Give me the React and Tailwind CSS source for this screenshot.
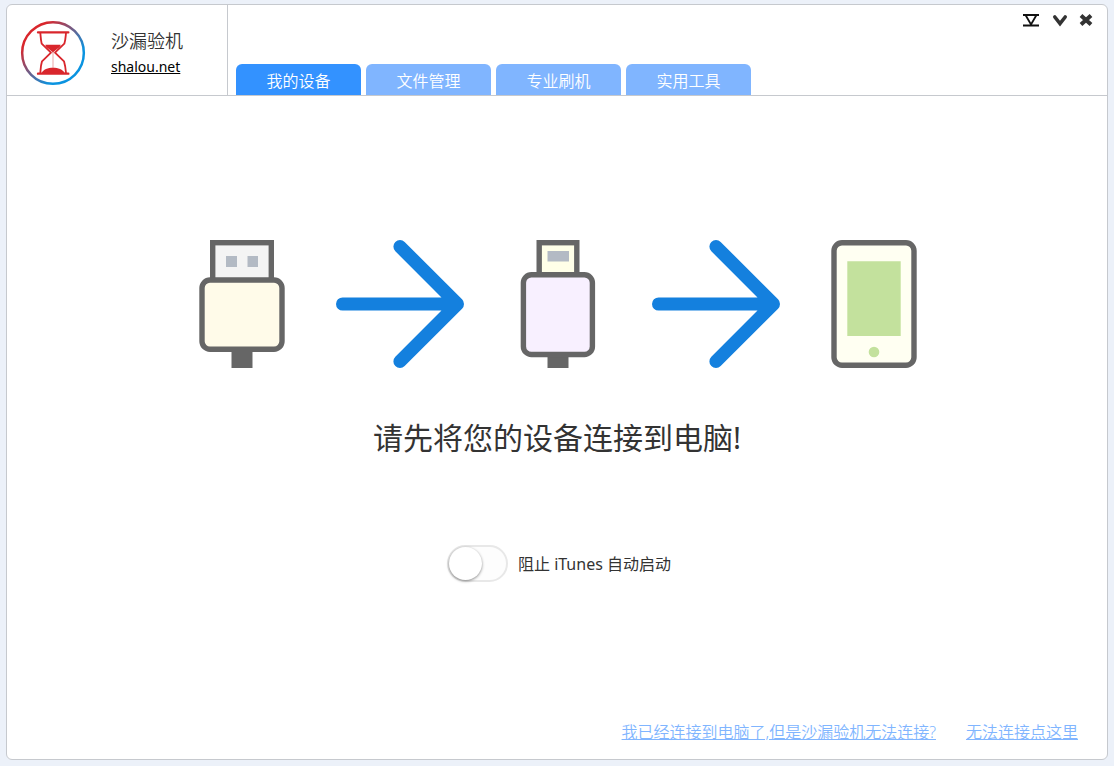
import React, { useState } from 'react';

const tabs = ['我的设备', '文件管理', '专业刷机', '实用工具'];

const Logo = () => (
    <svg className="w-[66px] h-[66px] shrink-0" viewBox="60 60 198 198" fill="none" aria-hidden="true">
        <defs>
            <linearGradient id="ring" x1="0" y1="0" x2="1" y2="1">
                <stop offset="0.2" stopColor="#d9262c" />
                <stop offset="0.72" stopColor="#0a93e0" />
            </linearGradient>
        </defs>
        <circle cx="159" cy="159" r="92.5" stroke="url(#ring)" strokeWidth="7.5" fill="#fff" />
        <g stroke="#d9262c" strokeLinecap="round" strokeLinejoin="round">
            <path d="M114 97H205M114 221H205" strokeWidth="7" />
            <path d="M121 99C122 108 122 118 125 131L153 158L126 184C122 197 122 207 121 219" strokeWidth="5.5" />
            <path d="M198 99C197 108 197 118 193 131L165 158L192 184C196 197 197 207 198 219" strokeWidth="5.5" />
        </g>
        <path d="M136 134H182C181 144 165 148 159 159C153 148 137 144 136 134Z" fill="#d9262c" />
        <path d="M159 155V204" stroke="#e69696" strokeWidth="2.5" />
        <path d="M125 219C129 208 144 203 159 203C174 203 189 208 194 219Z" fill="#d9262c" />
    </svg>
);

const UsbPlug = () => (
    <svg className="w-32 h-32" viewBox="0 0 128 128" aria-hidden="true">
        <path d="M53.5 108H74.5V128H53.5Z" fill="#666" />
        <rect x="34.7" y="2.7" width="58.6" height="44" fill="#f4f4f4" stroke="#666" strokeWidth="5.4" />
        <path d="M48 16H59V27H48ZM69.5 16H80V27H69.5Z" fill="#b3bac4" />
        <rect x="24" y="40" width="80" height="69.3" rx="8" fill="#fffbe9" stroke="#666" strokeWidth="5.4" />
    </svg>
);

const LightningPlug = () => (
    <svg className="w-32 h-32" viewBox="0 0 128 128" aria-hidden="true">
        <path d="M53.5 113H74.5V128H53.5Z" fill="#666" />
        <rect x="45.2" y="2.7" width="37.6" height="40" fill="#ffffe8" stroke="#666" strokeWidth="5.4" />
        <path d="M53.5 11H75V21.5H53.5Z" fill="#b3bac4" />
        <rect x="29.4" y="34.7" width="69" height="79.8" rx="8" fill="#f8f0ff" stroke="#666" strokeWidth="5.4" />
    </svg>
);

const Phone = () => (
    <svg className="w-32 h-32" viewBox="0 0 128 128" aria-hidden="true">
        <rect x="24" y="2.7" width="80" height="122.6" rx="8" fill="#fffff2" stroke="#666" strokeWidth="5.4" />
        <path d="M37.3 21.3H90.7V96H37.3Z" fill="#c3e19d" />
        <circle cx="64" cy="112" r="5.3" fill="#c3e19d" />
    </svg>
);

const Arrow = () => (
    <svg className="w-32 h-32" viewBox="0 0 128 128" fill="none" aria-hidden="true">
        <path
            d="M6.6 64H120M64 6.6L121.4 64L64 121.4"
            stroke="#1480de"
            strokeWidth="13.2"
            strokeLinecap="round"
            strokeLinejoin="round"
        />
    </svg>
);

const WindowControls = () => (
    <div className="flex justify-end gap-2 pr-3 pt-1.5">
        <button type="button" aria-label="最小化到托盘">
            <svg className="w-5 h-[18px]" viewBox="0 0 20 18" fill="none" stroke="#111" strokeWidth="1.8">
                <path d="M2 4H18M2 14.5H18M4.5 4L10 13.5L15.5 4" />
            </svg>
        </button>
        <button type="button" aria-label="最小化">
            <svg className="w-5 h-[18px]" viewBox="0 0 20 18" fill="none" stroke="#333" strokeWidth="3.6">
                <path d="M5.8 6L11 12.5L16.2 6" strokeLinecap="round" />
            </svg>
        </button>
        <button type="button" aria-label="关闭">
            <svg className="w-[18px] h-[18px]" viewBox="0 0 18 18" fill="none" stroke="#333" strokeWidth="4">
                <path d="M4 4.5L14 13.5M14 4.5L4 13.5" />
            </svg>
        </button>
    </div>
);

const App = () => {
    const [activeTab, setActiveTab] = useState(tabs[0]);
    const [blockItunes, setBlockItunes] = useState(false);

    return (
        <div className="min-h-screen flex bg-[#ecf1f9] px-1.5 pt-1 pb-1.5 font-['Noto_Sans','Noto_Sans_CJK_SC',sans-serif] text-[#333]">
            <div className="flex-1 flex flex-col bg-white border border-[#c6c9ce] rounded-md">
                <header className="flex h-[91px] border-b border-[#c6c9ce]">
                    <div className="flex items-center w-[221px] pl-[13px] pt-1.5 border-r border-[#c6c9ce]">
                        <Logo />
                        <div className="ml-[25px]">
                            <h1 className="text-lg leading-7 font-[350]">沙漏验机</h1>
                            <a href="#home" className="block text-sm leading-6 text-black underline">shalou.net</a>
                        </div>
                    </div>

                    <div className="flex-1 flex flex-col justify-between">
                        <WindowControls />
                        <nav className="flex gap-[5px] pl-2">
                            {tabs.map((tab) => (
                                <button
                                    key={tab}
                                    type="button"
                                    onClick={() => setActiveTab(tab)}
                                    className={`w-[125px] h-[31px] pt-0.5 rounded-t-md text-base leading-6 font-[350] text-white ${
                                        tab === activeTab ? 'bg-[#3392ff]' : 'bg-[#80b5ff]'
                                    }`}
                                >
                                    {tab}
                                </button>
                            ))}
                        </nav>
                    </div>
                </header>

                <main className="flex-1 flex flex-col items-center pt-36">
                    <div className="flex gap-[30px] pl-0.5">
                        <UsbPlug />
                        <Arrow />
                        <LightningPlug />
                        <Arrow />
                        <Phone />
                    </div>

                    <h2 className="mt-12 text-3xl leading-11">请先将您的设备连接到电脑!</h2>

                    <label className="mt-[85px] flex items-center gap-2.5 pl-1">
                        <input
                            type="checkbox"
                            checked={blockItunes}
                            onChange={(e) => setBlockItunes(e.target.checked)}
                            className="appearance-none w-[61px] h-[37px] rounded-full border-2 border-[#e8e8e8] bg-[#fdfdfd] before:block before:w-[33px] before:h-[33px] before:rounded-full before:bg-white before:shadow-[0_1px_3px_rgba(0,0,0,0.45)] before:transition-transform checked:bg-[#64bd63] checked:before:translate-x-6"
                        />
                        <span className="text-base">阻止 iTunes 自动启动</span>
                    </label>
                </main>

                <footer className="flex justify-end gap-[30px] pr-[29px] pb-[15px] text-base leading-6 font-[350] text-[#80b5ff]">
                    <a href="#help" className="underline">我已经连接到电脑了,但是沙漏验机无法连接?</a>
                    <a href="#connect" className="underline">无法连接点这里</a>
                </footer>
            </div>
        </div>
    );
};

export default App;
